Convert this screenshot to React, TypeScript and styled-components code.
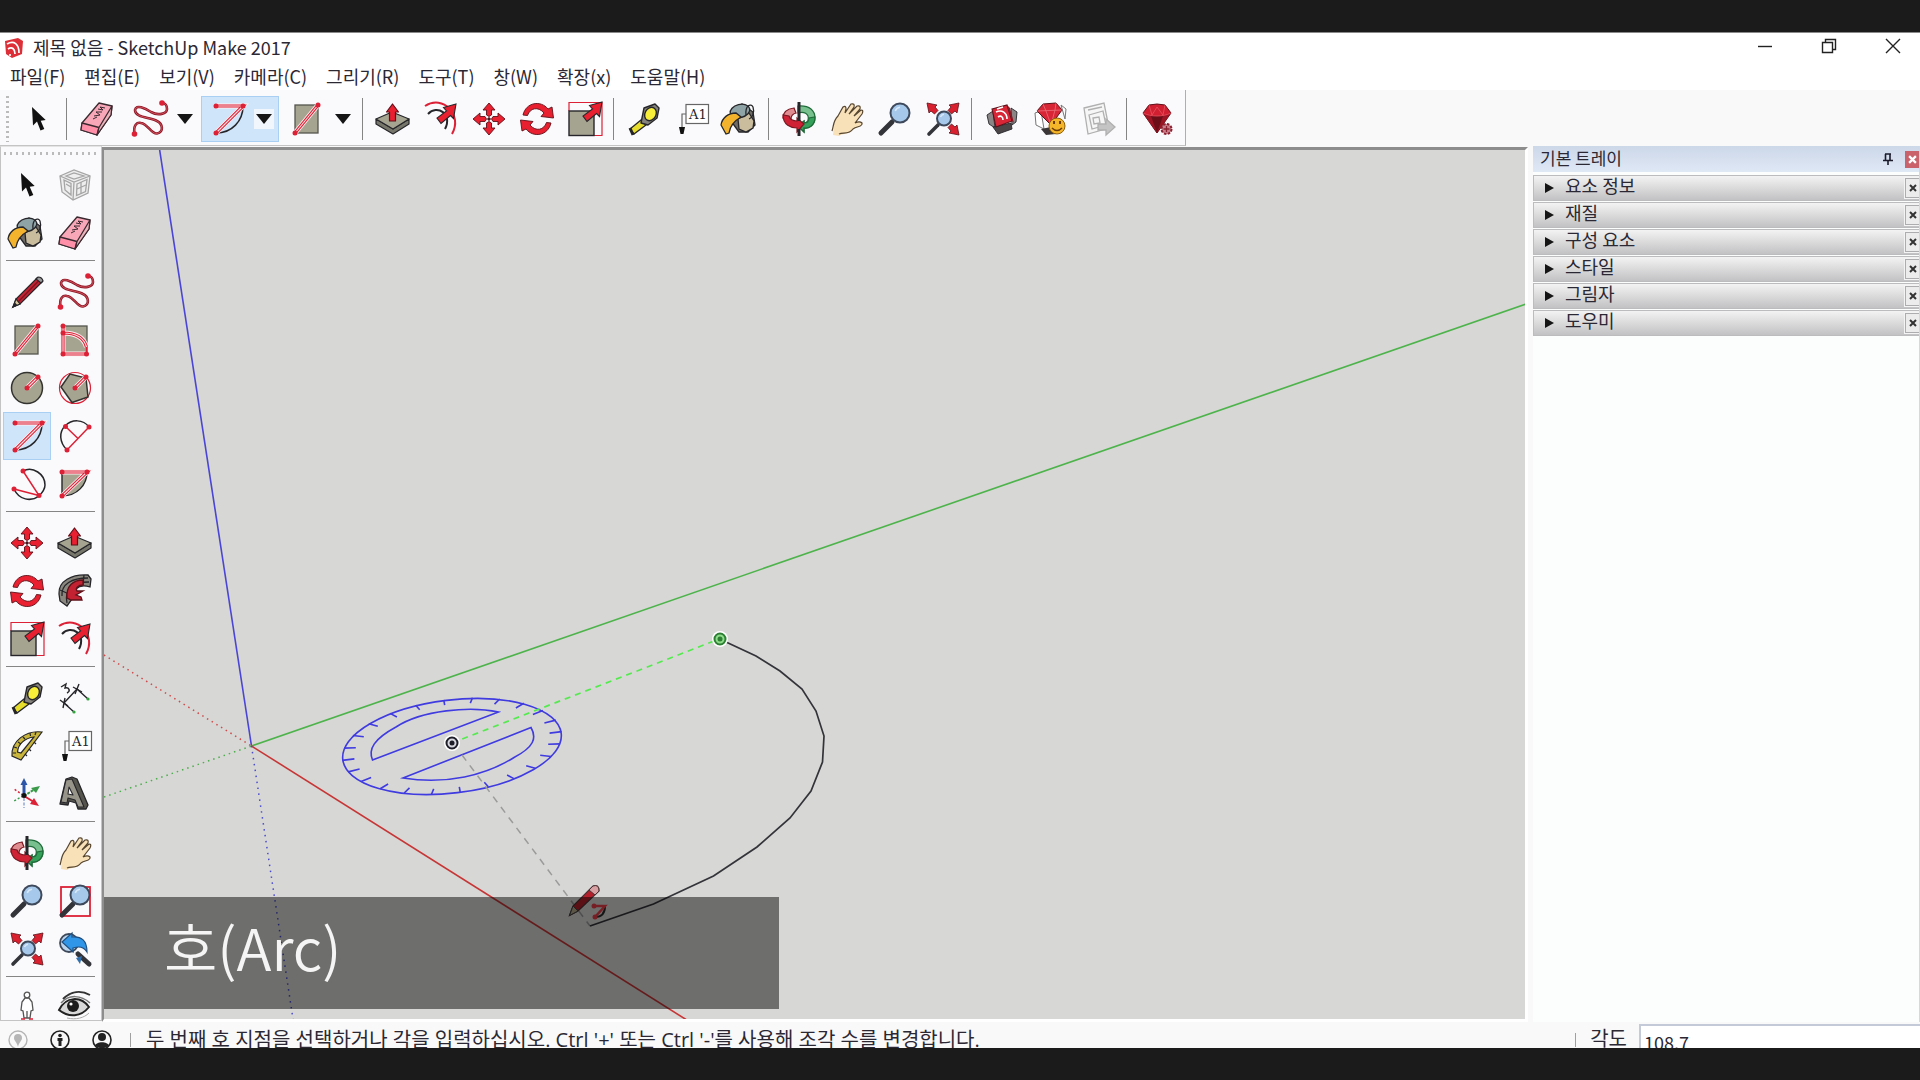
import React, { ReactNode } from "react";
import styled, { createGlobalStyle, css } from "styled-components";

const RED = "#dc2136";
const INK = "#26262a";
const STONE = "#a5a491";

const GlobalStyle = createGlobalStyle`
  *, *::before, *::after { box-sizing: border-box; }
  body { margin: 0; background: #1b1b1b; }
  button, input { font: inherit; color: inherit; border-radius: 0; }
`;

/* ---------- shell ---------- */

const Screen = styled.div`
  height: 100vh;
  padding: 32px 0;
  background: #1b1b1b;
  color: #2b2833;
  font-family: "Noto Sans CJK KR", sans-serif;
  font-size: 18px;
  line-height: 24px;
`;

const Window = styled.div`
  height: 100%;
  display: flex;
  flex-direction: column;
  overflow: hidden;
  background: #f9f9fa;
  border-top: 1px solid #8a8a8a;
`;

const PlainButton = styled.button`
  display: flex;
  align-items: center;
  justify-content: center;
  padding: 0;
  border: 0;
  background: transparent;
`;

const TitleBar = styled.header`
  flex: none;
  display: flex;
  align-items: center;
  height: 29px;
  padding-left: 4px;
  background: #fff;
`;

const Title = styled.h1`
  flex: 1;
  margin: 0;
  padding: 0 0 2px 9px;
  font-size: 18px;
  font-weight: 400;
  line-height: 24px;
`;

const WindowControls = styled.div`
  align-self: flex-start;
  display: flex;
  gap: 10px;
`;

const WindowButton = styled(PlainButton)`
  width: 54px;
  height: 26px;
`;

const MenuBar = styled.nav`
  flex: none;
  display: flex;
  align-items: center;
  gap: 19px;
  height: 28px;
  padding-left: 10px;
  background: #fff;
`;

const MenuButton = styled(PlainButton)`
  font-size: 18px;
  line-height: 24px;
`;

/* ---------- toolbars ---------- */

const TopStrip = styled.div`
  flex: none;
  display: flex;
  height: 56px;
  background: #f9f9f9;
`;

const TopToolbar = styled.div`
  display: flex;
  align-items: center;
  padding: 2px 4px 0 6px;
  background: #faf9fb;
  border-right: 1px solid #aeaeae;
  border-bottom: 1px solid #c4c4c4;
`;

const Grip = styled.span<{ $vertical?: boolean }>`
  flex: none;
  display: block;
  ${(p) =>
    p.$vertical
      ? css`
          width: 3px;
          height: 46px;
          margin-right: 5px;
          background: repeating-linear-gradient(#bbb 0 2px, transparent 2px 5px);
        `
      : css`
          width: 94px;
          height: 3px;
          margin: 5px 0 6px 1px;
          background: repeating-linear-gradient(90deg, #bbb 0 2px, transparent 2px 6px);
        `}
`;

const ToolButton = styled(PlainButton)<{ $active?: boolean }>`
  width: 48px;
  height: 48px;
  ${(p) =>
    p.$active &&
    css`
      background: #cfe5f9;
      border: 1px solid #a9cff3;
    `}
`;

const SplitButton = styled.div<{ $active?: boolean }>`
  display: flex;
  align-items: center;
  width: 78px;
  height: 46px;
  margin-left: 1px;
  border: 1px solid ${(p) => (p.$active ? "#a9cff3" : "transparent")};
  background: ${(p) => (p.$active ? "#cfe5f9" : "transparent")};
`;

const SplitMain = styled(PlainButton)`
  width: 52px;
  height: 44px;
`;

const SplitArrow = styled(PlainButton)<{ $active?: boolean }>`
  width: 20px;
  height: 20px;
  background: ${(p) => (p.$active ? "#f1f6fc" : "transparent")};
`;

const TopDivider = styled.span`
  width: 1px;
  height: 42px;
  margin: 0 6px 0 4px;
  background: #858585;
`;

const Body = styled.div`
  flex: 1;
  min-height: 0;
  display: flex;
`;

const SideToolbar = styled.div`
  flex: none;
  width: 102px;
  margin-bottom: 1px;
  padding: 0 2px;
  overflow: hidden;
  background: #faf9fb;
  border: 1px solid #c4c4c4;
  border-top-color: #e4e4e4;
`;

const ToolGrid = styled.div`
  display: grid;
  grid-template-columns: repeat(2, 48px);
`;

const SideDivider = styled.hr`
  height: 1px;
  margin: 3px 4px 7px 3px;
  border: 0;
  background: #858585;
`;

/* ---------- drawing area ---------- */

const Viewport = styled.main`
  position: relative;
  flex: 1;
  min-width: 0;
  margin-top: 1px;
  overflow: hidden;
  background: #d7d7d5;
  border: solid #8d8d8d;
  border-width: 3px 3px 3px 2px;
  border-right-color: #fff;
  border-bottom-color: #fff;
`;

const Scene = styled.svg`
  display: block;
  width: 100%;
  height: 100%;
`;

const Caption = styled.div`
  position: absolute;
  left: 0;
  bottom: 10px;
  display: flex;
  align-items: center;
  width: 675px;
  max-width: 100%;
  height: 112px;
  padding: 0 0 14px 60px;
  background: rgba(0, 0, 0, 0.49);
  color: #f5f5f5;
  font-size: 58px;
  font-weight: 350;
  line-height: 72px;
`;

/* ---------- tray ---------- */

const Tray = styled.aside`
  flex: none;
  width: 387px;
  margin: 0 0 0 5px;
  overflow: hidden;
  background: #fcfefe;
  border-right: 1px solid #d5d8de;
`;

const TrayHeader = styled.div`
  display: flex;
  align-items: center;
  height: 26px;
  margin-bottom: 3px;
  padding-left: 7px;
  background: linear-gradient(#ccd7e8, #dfe8f5);
`;

const TrayTitle = styled.h2`
  flex: 1;
  margin: 0;
  padding-bottom: 2px;
  font-size: 17px;
  font-weight: 400;
  line-height: 24px;
`;

const PinButton = styled(PlainButton)`
  width: 22px;
  height: 20px;
  margin-right: 6px;
`;

const TrayClose = styled(PlainButton)`
  width: 14px;
  height: 17px;
  background: #c9626b;
`;

const Panel = styled.section`
  display: flex;
  align-items: center;
  height: 26px;
  margin-bottom: 1px;
  padding-left: 10px;
  border: 1px solid #bcbcbe;
  border-right: 0;
  background: linear-gradient(#f3f3f3, #c2c2c4);
`;

const PanelToggle = styled(PlainButton)`
  flex: 1;
  justify-content: flex-start;
  gap: 11px;
  height: 24px;
`;

const PanelName = styled.span`
  padding-bottom: 6px;
  font-size: 18px;
  line-height: 18px;
`;

const PanelClose = styled(PlainButton)`
  width: 14px;
  height: 20px;
  border: 1px solid #adadaf;
  border-right: 0;
  background: #ececec;
  outline: 1px solid #f4f4f4;
`;

/* ---------- status bar ---------- */

const StatusBar = styled.footer`
  flex: none;
  display: flex;
  align-items: flex-start;
  height: 26px;
  overflow: hidden;
  padding-left: 8px;
`;

const StatusIcons = styled.div`
  display: flex;
  gap: 22px;
  padding: 8px 18px 0 0;
`;

const StatusDivider = styled.span`
  width: 1px;
  height: 14px;
  margin-top: 11px;
  background: #a0a0a0;
`;

const StatusText = styled.p`
  flex: 1;
  margin: 6px 0 0 15px;
  font-family: "Open Sans", "Noto Sans CJK KR", sans-serif;
  font-size: 20px;
  line-height: 24px;
  white-space: nowrap;
`;

const Measure = styled.label`
  display: flex;
  gap: 12px;
  padding-left: 14px;
  font-size: 20px;
  line-height: 32px;
`;

const MeasureInput = styled.input`
  width: 281px;
  height: 36px;
  margin-top: 2px;
  padding: 0 3px;
  border: 2px solid #c5cad8;
  border-right: 0;
  background: #fff;
  font-size: 18px;
  line-height: 32px;
`;

/* ---------- icons ---------- */

const Glyph = styled.svg`
  flex: none;
  display: block;
  overflow: visible;
`;

const Icon = ({ children }: { children: ReactNode }) => (
  <Glyph width="36" height="36" viewBox="0 0 36 36" fill="none" aria-hidden="true">
    {children}
  </Glyph>
);

const RedLine = ({ d }: { d: string }) => (
  <g>
    <path d={d} stroke="#fdf1f2" strokeWidth="5" />
    <path d={d} stroke={RED} strokeWidth="3.200" />
    <path d={d} stroke="#fbdfe2" strokeWidth="1.100" />
  </g>
);

const Dots = ({ at }: { at: number[][] }) => (
  <g fill={RED}>
    {at.map(([x, y]) => (
      <circle key={`${x}-${y}`} cx={x} cy={y} r="2.5" />
    ))}
  </g>
);

const Lens = ({ x, y, r }: { x: number; y: number; r: number }) => (
  <g>
    <circle cx={x} cy={y} r={r} fill="#a6c8ea" stroke="#3e4a5c" strokeWidth="2" />
    <path d={`M${x - r * 0.5} ${y - r * 0.2} A${r * 0.6} ${r * 0.6} 0 0 1 ${x} ${y - r * 0.6}`} stroke="#d7e8f8" strokeWidth="1.6" />
  </g>
);

const BigArrow = () => (
  <path d="M35 1 L32.5 15.5 L29.5 12.5 L20 20.5 L16 15 L25.5 8 L22.5 4.5 Z" fill="#e8202f" stroke={INK} strokeWidth="1.1" />
);

const RedCase = () => (
  <g>
    <path d="M3 14 L9 10 L11 27 L5 23 Z M27 7 L33 11 L32 21 L28 24 Z" fill="#8a8686" stroke={INK} strokeWidth=".9" />
    <path d="M9 26 L27 22 L28 28 L14 33 Z" fill="#4a4648" stroke={INK} strokeWidth=".9" />
    <path d="M8 8 L23 4 L28 20 L12 26 Z" fill="#d92636" stroke="#5a1219" strokeWidth="1.1" />
    <path d="M23 4 L26 7 L30 22 L28 20 Z" fill="#8c1a25" />
  </g>
);

const icons: Record<string, ReactNode> = {
  select: <path d="M12 6 L13 24.5 L17 20.5 L20.5 29.5 L24.3 28 L20.7 19.7 L25.7 19 Z" fill="#111" />,
  component: (
    <g stroke="#a5a5a5" strokeWidth="1.3" fill="#eee">
      <path d="M3 9 L17 3 L33 9 L31 26 L16 33 L5 25 Z" />
      <path d="M3 9 L17 15 L33 9 M17 15 L16 33 M7 13 L14 16.500 L14 28 L8 23 Z M20 17 L30 12.500 L28.500 24.500 L19.500 28.500 Z M9 9 L17 6 L27 9 L17 12 Z" />
      <path d="M9 17 L14 20 M20 22 L29 18 M24 15 V27" />
    </g>
  ),
  paint: (
    <g stroke={INK} strokeWidth="1.3">
      <path d="M10 8 L20 3 L31 11 L33 24 L26 31 L17 31 L9 20 Z" fill="#6f6c66" />
      <path d="M16 18 L27 12 L32 20 L31 27 L24 31 L17 28 Z" fill="#c9bd9e" />
      <ellipse cx="18" cy="10" rx="10" ry="6.500" transform="rotate(-14 18 10)" fill="#8ea3a6" />
      <path d="M24 14 C23 4 29 2 31 6 C33 12 30 17 27 18" fill="none" />
      <path d="M14 12 C6 12 0 17 -1 24 L4 33 L7 32 C8 25 12 20 19 16 Z" fill="#f4b32c" />
    </g>
  ),
  eraser: (
    <g stroke="#3a2a30" strokeWidth="1.3" strokeLinejoin="round">
      <path d="M20 2 L33 5 L32 14 L18 34 L2 29 L3 22 Z" fill="#f8a7b8" />
      <path d="M3 22 L20 26.500 L18 34 L2 29 Z" fill="#ff8fa9" />
      <path d="M20 26.500 L33 5 L32 14 L18 34 Z" fill="#eeb3ba" />
      <path d="M14 18 L18 16 M15 15 L21 14 L17 11 L23 11 M19 8 L24 9 L21 6 L26 7" strokeWidth="1" fill="none" />
    </g>
  ),
  pencil: (
    <g stroke={INK} strokeWidth="1.2">
      <path d="M4 33 L7 25 L28 4 L33 8 L11 30 Z" fill="#c22232" />
      <path d="M9.500 27.500 L30 6.500" stroke="#7c1520" />
      <path d="M4 33 L7 25 L11 30 Z" fill="#dcc79e" />
      <path d="M27 5 L29 3 Q33 3 34 7 L32 9 Z" fill="#9a9a9a" />
      <path d="M4 33 L6 29.500 L7.500 31 Z" fill="#111" />
    </g>
  ),
  freehand: (
    <g>
      <path d="M3.500 33 C2 24 6 21 10 22 C17 23 20 33 26 32.500 C33 31 32 23 26 20 C19 16 4 17 4 9 C5 3 14 7 20 11 C27 15 36 13 36 8 C36 4 34 2 31 2" stroke="#8e1826" strokeWidth="2.600" />
      <path d="M3.500 33 C2 24 6 21 10 22 C17 23 20 33 26 32.500 C33 31 32 23 26 20 C19 16 4 17 4 9 C5 3 14 7 20 11 C27 15 36 13 36 8 C36 4 34 2 31 2" stroke="#e0606b" strokeWidth=".8" />
      <circle cx="3.500" cy="33" r="2.800" fill={RED} />
      <circle cx="31" cy="2" r="2.800" fill={RED} />
    </g>
  ),
  rect: (
    <g>
      <rect x="6" y="4" width="23" height="28" fill={STONE} stroke="#55554d" strokeWidth="1.300" />
      <RedLine d="M6 32 L29 4" />
      <Dots at={[[6, 32], [29, 4]]} />
    </g>
  ),
  rotrect: (
    <g>
      <rect x="6" y="4" width="24" height="28" fill={STONE} stroke="#55554d" strokeWidth="1.300" />
      <RedLine d="M6 4 V32 H29.500 M6 11 C20 11 27 16 29.500 25" />
      <path d="M29.500 25 V32" stroke={RED} strokeWidth="1.400" />
      <Dots at={[[6, 4], [6, 11], [6, 32], [29.5, 32]]} />
    </g>
  ),
  circle: (
    <g>
      <circle cx="18" cy="18" r="15.500" fill={STONE} stroke="#33332f" strokeWidth="1.500" />
      <RedLine d="M18 18 L29 7" />
      <Dots at={[[18, 18], [29, 7]]} />
    </g>
  ),
  polygon: (
    <g>
      <circle cx="18" cy="18" r="15.500" stroke={RED} strokeWidth="1.200" />
      <path d="M4 17 L13 4 L29 8 L31 27 L15 32.500 Z" fill={STONE} stroke="#33332f" strokeWidth="1.500" />
      <RedLine d="M18 18 L29 7" />
      <Dots at={[[18, 18], [29, 7]]} />
    </g>
  ),
  arc2: (
    <g>
      <path d="M33 5 C33 20 22 32 6 32" stroke={INK} strokeWidth="1.500" />
      <RedLine d="M6 5 H33 L6 32" />
      <Dots at={[[6, 5], [33, 5], [6, 32]]} />
    </g>
  ),
  arc: (
    <g>
      <path d="M10 32 C2 24 2 14 8 8 C15 1 26 1 32 9" stroke={INK} strokeWidth="1.500" />
      <path d="M10 32 L32 9 M8.500 8.500 L21 20.500" stroke={RED} strokeWidth="1.500" />
      <Dots at={[[8.5, 8.5], [32, 9], [10, 32]]} />
    </g>
  ),
  arc3: (
    <g>
      <path d="M14 5 C24 0 36 8 36 19 C36 24 33 27 30 30 C22 36 10 34 5 23" stroke={INK} strokeWidth="1.500" />
      <path d="M14 5 L30 29.500 L5 23" stroke={RED} strokeWidth="1.500" />
      <Dots at={[[14, 5], [30, 29.5], [5, 23]]} />
    </g>
  ),
  pie: (
    <g>
      <path d="M5 6 H30 C30 19 20 30 5 30 Z" fill={STONE} stroke={INK} strokeWidth="1.400" />
      <RedLine d="M5 6 H30 L5 30" />
      <Dots at={[[5, 6], [30, 6], [5, 30]]} />
    </g>
  ),
  move: (
    <g fill="#e8202f" stroke="#5e1119" strokeWidth=".9">
      {[0, 90, 180, 270].map((a) => (
        <path key={a} transform={`rotate(${a} 18 18)`} d="M18 2 L24 9 L20.500 9 L20.500 14 L18 15.500 L15.500 14 L15.500 9 L12 9 Z" />
      ))}
      <circle cx="18" cy="18" r="1.300" fill={INK} />
    </g>
  ),
  pushpull: (
    <g stroke={INK} strokeWidth="1.200" strokeLinejoin="round">
      <path d="M1 18 L18 28 L34 18 V23 L18 33 L1 23 Z" fill="#77766a" />
      <path d="M1 18 L17 11 L34 18 L18 28 Z" fill={STONE} />
      <path d="M17.500 3 L23.500 11 H20.500 V20 H14.500 V11 H11.500 Z" fill="#e8202f" stroke="#5e1119" />
    </g>
  ),
  rotate: (
    <g fill="#e8202f" stroke="#5e1119" strokeWidth=".9">
      {[0, 180].map((a) => (
        <path key={a} transform={`rotate(${a} 18 18)`} d="M4 14 C7 1 22 -1 29 8 L33 6 L34.500 17 L22 15.500 L25 12 C19 5 11 7 8.500 14.500 Z" />
      ))}
    </g>
  ),
  followme: (
    <g stroke={INK} strokeWidth="1.300">
      <path d="M2 21 C1 8 15 1 31 2 L34 6 L33 14 C27 12 22 13 19 16 L15 26 L10 33 L3 28 Z" fill="#8a887e" />
      <path d="M5 23 C4 11 15 5 31 5 M10 30 C7 17 15 9 32 9 M27 2 L26 12 M3 17 L12 21" fill="none" />
      <path d="M26 7 C16 7 9 13 10 25 L14 27 L25 27 L24 24 L19 22 L26 18 L20 18 C18 15 21 12 26 12 Z" fill="#c22232" stroke="#5e1119" />
    </g>
  ),
  scale: (
    <g>
      <path d="M2 10 V1.500 H35 V34.500 H27" stroke={RED} strokeWidth="1.200" />
      <rect x="2" y="10" width="25" height="24.500" fill={STONE} stroke={INK} strokeWidth="1.400" />
      <BigArrow />
    </g>
  ),
  offset: (
    <g>
      <path d="M2 5 C20 -7 40 14 29 33" stroke={RED} strokeWidth="2" />
      <path d="M5 13 C14 3 30 13 22 28" stroke={INK} strokeWidth="2" />
      <g transform="translate(-2 2)"><BigArrow /></g>
    </g>
  ),
  tape: (
    <g stroke={INK} strokeWidth="1.400" strokeLinejoin="round">
      <path d="M4 28 L15 19 L20 24 L8 33 Z" fill="#e7dd2c" />
      <path d="M4 27 L7 34" strokeWidth="3" />
      <path d="M18 7 L29 3 L33 7 L31 17 L22 24 L15 22 Z" fill="#85837b" />
      <ellipse cx="24.500" cy="13" rx="5.500" ry="7" transform="rotate(28 24.500 13)" fill="#f7ee3a" />
    </g>
  ),
  dimension: (
    <g stroke={INK} strokeWidth="1.400">
      <path d="M7 23 L20 9 L31 19 M7 23 L17 32" />
      <path d="M3 20 L11 26 M8 18 L6 28 M16 7 L25 12 M22 4 L18 14" />
      <path d="M4 7 L9 4 L8 8 C12 7 14 11 10 13" />
      <circle cx="31" cy="19" r="1.600" fill="#2fa53b" stroke="none" />
      <circle cx="17" cy="32" r="1.600" fill="#2fa53b" stroke="none" />
    </g>
  ),
  protractor: (
    <g stroke={INK} strokeWidth="1.200">
      <path d="M33 4 C17 2 2 13 3 28 L12 32 Z" fill="#c9b53b" />
      <path d="M25 9 C16 10 9 16 8.500 24 L12 25 Z" fill="#fbfafc" />
      <path d="M27 4 L26 7 M21 5 L21.500 8 M14 9 L16 11 M9 14 L12 16 M5 19 L8 20 M4 25 L7 25 M16 26 L18 28 M20 21 L22 23 M25 14 L27 16" />
    </g>
  ),
  text: (
    <g>
      <rect x="12" y="3.500" width="22.500" height="19" fill="#fff" stroke="#666" strokeWidth="1.200" />
      <text x="15" y="18" fontFamily="DejaVu Serif, serif" fontSize="13" fill={INK}>A1</text>
      <path d="M12 13 H8 V27" stroke="#666" strokeWidth="1.200" />
      <path d="M5 26 H11 L9.500 33 H6.500 Z" fill="#111" />
    </g>
  ),
  axes: (
    <g strokeWidth="2">
      <path d="M15 19 V7" stroke="#2d55a8" strokeWidth="3" />
      <path d="M15 2 L18.500 9 H11.500 Z" fill="#2d55a8" />
      <path d="M15 20 L26 13" stroke="#3a9a4a" strokeDasharray="3 1" />
      <path d="M31 10 L27 17 L22 12 Z" fill="#3a9a4a" />
      <path d="M15 20 L25 26" stroke={RED} />
      <path d="M30 30 L21 28 L25 22 Z" fill={RED} />
      <path d="M14 19 L5 13" stroke={RED} strokeDasharray="2 2" strokeWidth="1.500" />
      <path d="M14 20 L5 25" stroke="#3a9a4a" strokeDasharray="2 2" strokeWidth="1.500" />
      <path d="M15 22 V32" stroke="#8fa6d6" strokeDasharray="3 1.500" strokeWidth="1.500" />
      <circle cx="15" cy="19.500" r="2.500" fill="#111" />
    </g>
  ),
  text3d: (
    <g strokeLinejoin="round">
      <path d="M9 3 L15 1 L20 3 L31 29 L29 33 L21 33 L19 27 L12 25 L11 29 L3 28 Z" fill="#55544d" stroke={INK} strokeWidth="1.300" />
      <path d="M9 4 L15 3 L27 31 L21 31 L18 24 L11 22 L10 27 L4 26 Z" fill="#97958a" stroke={INK} strokeWidth="1.100" />
      <path d="M12 11 L16 19 L11 18 Z" fill="#faf9fb" stroke={INK} strokeWidth="1.100" />
    </g>
  ),
  orbit: (
    <g strokeWidth="1.200">
      <path d="M17 5 C29 4 34 10 34 17 C34 24 28 28 23 27 L23 31 L17 25 L23 20 L23 22 C27 22 28 18 27 15 C25 11 21 11 17 12 Z" fill="#79c08f" stroke="#1f6b39" />
      <path d="M34 16 C34 24 28 28 23 27 L23 31 L17 25 L23 20 L23 22 C26 22 28 20 28 17 Z" fill="#35a05a" stroke="#1f6b39" />
      <path d="M13 7 C5 8 2 12 2 17 L10 18 C10 15 11 13 15 12 Z" fill="#df8d90" stroke="#7c1822" />
      <path d="M2 14 C2 24 10 27 16 27 V31 L23 23 L16 17 V20 C12 20 9 18 8 15 Z" fill="#cf2335" stroke="#7c1822" />
      <path d="M18 1 V20 M18 28 V35" stroke={INK} strokeWidth="3" />
    </g>
  ),
  pan: (
    <g>
      <path d="M4 34 C5 26 4 20 9 15 L14 6 Q17 4 17 8 L16 12 L22 3 Q26 2 25 6 L20 13 L28 5 Q32 4 31 8 L25 15 L32 9 Q35 9 33 13 L26 22 C28 21 31 20 33 22 C34 26 28 25 24 28 C20 34 14 32 10 35" fill="#f8e0b8" />
      <path d="M3 30 C5 24 4 20 9 15 L14 6 Q17 4 17 8 L16 12 L22 3 Q26 2 25 6 L20 13 L28 5 Q32 4 31 8 L25 15 L32 9 Q35 9 33 13 L26 22 C28 21 31 20 33 22 C34 26 28 25 24 28 C20 34 14 31 10 33" stroke="#55452f" strokeWidth="1.200" />
    </g>
  ),
  zoom: (
    <g>
      <path d="M4 32 L15 21" stroke="#33343a" strokeWidth="5" strokeLinecap="round" />
      <Lens x={23} y={12} r={9.5} />
    </g>
  ),
  zoomwin: (
    <g>
      <rect x="4" y="4" width="29" height="29" stroke={RED} strokeWidth="1.800" />
      <path d="M5 32 L16 21" stroke="#33343a" strokeWidth="5" strokeLinecap="round" />
      <Lens x={23} y={12} r={9.5} />
    </g>
  ),
  extents: (
    <g>
      <path d="M4 33 L13 24" stroke="#33343a" strokeWidth="3.600" strokeLinecap="round" />
      <g fill="#d8202f" stroke="#5e1119" strokeWidth=".8">
        {[0, 90, 180].map((a) => (
          <path key={a} transform={`rotate(${a} 18 18)`} d="M2 2 L12 4 L10 6 L13 9.500 L9.500 13 L6 10 L4 12 Z" />
        ))}
      </g>
      <Lens x={19} y={17.5} r={7} />
    </g>
  ),
  previous: (
    <g>
      <path d="M21 23 L32 33" stroke="#33343a" strokeWidth="5" strokeLinecap="round" />
      <circle cx="12" cy="12" r="9" fill="#bcd5ec" stroke="#3e4a5c" strokeWidth="1.800" />
      <path d="M5 11 L15 2 V6 C24 5 30 9 30 21 C27 16 22 15 16 17 V21 Z" fill="#2f96e8" stroke="#1f4f80" strokeWidth="1.200" />
      <path d="M19 27 L25 25 L23 33 Z" fill="#2f6fae" />
    </g>
  ),
  person: (
    <g stroke="#555" strokeWidth="1.300" fill="#fff">
      <path d="M15 28 L14 21 L12 20 L13 12 L16 8 H20 L23 12 L24 20 L22 21 L21 28 Z M18 21 V28" />
      <circle cx="18" cy="5" r="2.800" />
      <path d="M12 29 H16 M20 29 H24" stroke={RED} />
    </g>
  ),
  eye: (
    <g>
      <path d="M6 9 C14 1 24 0 33 5" stroke="#333" strokeWidth="2" />
      <path d="M2 20 C9 6 24 6 32 17 C24 27 12 28 2 20 Z" fill="#d8d8d8" stroke="#222" strokeWidth="2" />
      <path d="M4 13 C12 4 24 5 33 13" stroke="#777" strokeWidth="1.500" />
      <circle cx="16" cy="16" r="6" fill="#1c1c1c" />
      <circle cx="14" cy="14" r="1.600" fill="#fff" />
      <path d="M10 28 C19 30 27 28 32 23" stroke="#aaa" />
    </g>
  ),
  warehouse: (
    <g>
      <RedCase />
      <path d="M12 11 C18 8 23 12 23 18 M14 16 C17 14 19 16 19 19 M13 8 L19 6" stroke="#fff" strokeWidth="1.600" />
    </g>
  ),
  extensions: (
    <g>
      <path d="M3 12 L9 10 L12 28 L4 24 Z M29 4 L34 8 L33 18 Z" fill="#fff" stroke="#777" />
      <path d="M9 28 L24 25 V33 L14 34 Z" fill="#3a3638" />
      <path d="M5 10 L11 3 L24 2 L30 9 L19 24 Z" fill="#d92636" stroke="#5a1219" />
      <path d="M5 10 L30 9 M11 3 L14 10 L19 24 L23 9 L24 2" stroke="#e8707a" strokeWidth=".8" />
      <circle cx="25" cy="25" r="8" fill="#f5b62a" stroke="#8d5f0c" />
      <path d="M20 27 Q25 32 30 27" stroke="#6b3d05" strokeWidth="1.500" />
      <path d="M22 20 V23 M28 20 V23" stroke="#6b3d05" strokeWidth="2" />
    </g>
  ),
  layout: (
    <g stroke="#b0b0b0" strokeWidth="1.300">
      <path d="M4 7 L24 2 L29 27 L8 33 Z" fill="#f6f6f6" />
      <path d="M8 9 L22 6 M9 14 L23 10 L26 24 L12 28 Z M13 17 L19 16 L20 22 L14 23 Z" />
      <path d="M18 23 H26 V18 L35 26 L26 34 V29 H18 Z" fill="#c4c4c4" />
    </g>
  ),
  ruby: (
    <g>
      <path d="M4 12 L10 4 Q18 2 26 4 L32 12 L18 32 Z" fill="#cf1f30" stroke="#5e1119" />
      <path d="M4 12 L18 32 L32 12 C24 16 12 16 4 12 Z" fill="#9c1524" />
      <path d="M12 15 L18 32 L24 15 Z" fill="#6c0e18" />
      <path d="M4 12 C12 16 24 16 32 12 M10 4 L13 14 L18 6 L24 14 L26 4" stroke="#e8525e" strokeWidth=".8" />
      <circle cx="27.500" cy="28" r="5" fill="#c7808a" stroke="#8d1f30" strokeWidth="2" strokeDasharray="2.500 1.400" />
      <path d="M27.500 25 V31 M24.500 28 H30.500" stroke="#8d1f30" strokeWidth="1.300" />
    </g>
  ),
};

const Tool = ({ name, label, active }: { name: string; label: string; active?: boolean }) => (
  <ToolButton type="button" aria-label={label} $active={active}>
    <Icon>{icons[name]}</Icon>
  </ToolButton>
);

const SplitTool = ({ name, label, active }: { name: string; label: string; active?: boolean }) => (
  <SplitButton $active={active}>
    <SplitMain type="button" aria-label={label}>
      <Icon>{icons[name]}</Icon>
    </SplitMain>
    <SplitArrow type="button" aria-label={`${label} 더 보기`} $active={active}>
      <Glyph width="16" height="10" viewBox="0 0 16 10" aria-hidden="true">
        <path d="M0 0 H16 L8 10 Z" fill="#151515" />
      </Glyph>
    </SplitArrow>
  </SplitButton>
);

/* ---------- data ---------- */

type ToolDef = [name: string, label: string];

const menus = ["파일(F)", "편집(E)", "보기(V)", "카메라(C)", "그리기(R)", "도구(T)", "창(W)", "확장(x)", "도움말(H)"];

const topGroups: ToolDef[][] = [
  [["pushpull", "밀기/끌기"], ["offset", "오프셋"], ["move", "이동"], ["rotate", "회전"], ["scale", "배율"]],
  [["tape", "줄자"], ["text", "텍스트"], ["paint", "페인트통"]],
  [["orbit", "궤도"], ["pan", "이동 보기"], ["zoom", "확대/축소"], ["extents", "범위 확대"]],
  [["warehouse", "3D Warehouse"], ["extensions", "Extension Warehouse"], ["layout", "LayOut"]],
  [["ruby", "확장 관리자"]],
];

const sideGroups: ToolDef[][] = [
  [["select", "선택"], ["component", "구성 요소"], ["paint", "페인트통"], ["eraser", "지우개"]],
  [
    ["pencil", "선"], ["freehand", "자유 곡선"], ["rect", "직사각형"], ["rotrect", "회전 직사각형"],
    ["circle", "원"], ["polygon", "다각형"], ["arc2", "2점 호"], ["arc", "호"], ["arc3", "3점 호"], ["pie", "파이"],
  ],
  [["move", "이동"], ["pushpull", "밀기/끌기"], ["rotate", "회전"], ["followme", "따라가기"], ["scale", "배율"], ["offset", "오프셋"]],
  [["tape", "줄자"], ["dimension", "치수"], ["protractor", "각도기"], ["text", "텍스트"], ["axes", "축"], ["text3d", "3D 텍스트"]],
  [["orbit", "궤도"], ["pan", "이동 보기"], ["zoom", "확대/축소"], ["zoomwin", "창 확대"], ["extents", "범위 확대"], ["previous", "이전"]],
  [["person", "카메라 배치"], ["eye", "둘러보기"]],
];

const panels = ["요소 정보", "재질", "구성 요소", "스타일", "그림자", "도우미"];

/* ---------- scene ---------- */

const CENTER = { x: 452, y: 746 };

// The protractor lies on the ground plane: u follows the green axis, v the red one.
const onDisc = (deg: number, k: number) => {
  const a = (deg * Math.PI) / 180;
  const x = CENTER.x + k * (Math.cos(a) * 90.9 + Math.sin(a) * 61.9);
  const y = CENTER.y + k * (Math.cos(a) * -35.5 + Math.sin(a) * 32.6);
  return `${x.toFixed(1)} ${y.toFixed(1)}`;
};

const ticks = Array.from({ length: 24 }, (_, i) => `M${onDisc(i * 15, 1)} L${onDisc(i * 15, 0.89)}`).join(" ");

const Snap = ({ x, y, color, fill }: { x: number; y: number; color: string; fill: string }) => (
  <g>
    <circle cx={x} cy={y} r="8" fill="#fff" />
    <circle cx={x} cy={y} r="5.500" fill={fill} stroke={color} strokeWidth="2" />
    <circle cx={x} cy={y} r="2.500" fill={color} />
  </g>
);

const Drawing = () => (
  <Scene viewBox="104 150 1421 869" preserveAspectRatio="xMinYMin slice" fill="none" role="img" aria-label="호 그리기">
    <path d="M159.500 149 L251.500 746" stroke="#4a45d6" strokeWidth="1.600" />
    <path d="M251.500 746 L1526 304" stroke="#4db34b" strokeWidth="1.600" />
    <path d="M251.500 746 L686 1019.500" stroke="#c73636" strokeWidth="1.600" />
    <path d="M104 655 L251.500 746" stroke="#d04a4a" strokeWidth="1.500" strokeDasharray="1.500 4" />
    <path d="M104 797 L251.500 746" stroke="#4fae4f" strokeWidth="1.500" strokeDasharray="1.500 4" />
    <path d="M251.500 746 L293 1019" stroke="#4a4ad0" strokeWidth="1.500" strokeDasharray="1.500 4.500" />

    <g stroke="#3f3be0" strokeWidth="1.600">
      <ellipse cx="452" cy="746.500" rx="110" ry="46.500" transform="rotate(-6.900 452 746.500)" />
      <path d={ticks} />
      <path d="M372.500 760 L498.500 712 C470 706 422 710 396 727 C374 739 368 749 372.500 760 Z" />
      <path d="M403 778 L531 727.500 C537 738 534 747 514 757.500 C486 775 447 785 403 778 Z" />
    </g>

    <path d="M452 743 L714 641" stroke="#55ea4f" strokeWidth="1.700" strokeDasharray="6 5" />
    <path d="M462 755 L590 926" stroke="#9b9b9b" strokeWidth="1.500" strokeDasharray="7 6" />
    <path
      d="M726 642 L756 656 L780 671 L802 689 L816 711 L824 736 L822.500 762 L811 791 L790 818 L757 847 L713.500 876 L653.500 904 L590 926"
      stroke="#33333a"
      strokeWidth="1.700"
    />
    <Snap x={452} y={743} color="#1d1e28" fill="#d8d8e0" />
    <Snap x={720} y={639} color="#2c7f33" fill="#8fdc8b" />

    <path d="M569.500 915.500 L573 906 L593 886 Q599 884 599 891 L578 911 Z" fill="#b3202c" stroke="#4b3335" strokeWidth="1.200" />
    <path d="M569.500 915.500 L573 906 L578 911 Z" fill="#b5a98c" stroke="#444" />
    <path d="M589 890 L593 886 Q599 884 599 891 L595 895 Z" fill="#d9a0a4" stroke="#4b3335" />
    <path d="M605 906 C605 914 601 917 595 917" stroke="#2c2c2c" strokeWidth="2" />
    <path d="M594 906 H605 L595 917" stroke="#e8404c" strokeWidth="2.500" />
    <circle cx="594" cy="906" r="2.500" fill="#e8404c" />
    <circle cx="595" cy="917" r="2.500" fill="#e8404c" />
  </Scene>
);

const Cross = ({ color, size }: { color: string; size: number }) => (
  <Glyph width={size} height={size} viewBox="0 0 8 8" aria-hidden="true">
    <path d="M1 1 L7 7 M7 1 L1 7" stroke={color} strokeWidth="2" />
  </Glyph>
);

const App = () => (
  <Screen>
    <GlobalStyle />
    <Window>
      <TitleBar>
        <Glyph width="20" height="20" viewBox="0 0 20 20" fill="none" aria-hidden="true">
          <path d="M1 3 L14 0 L19 3 L18 16 L8 20 L2 16 Z" fill="#dd2f38" />
          <path d="M3 6 C10 2 15 6 15 15 M4 11 C8 8 11 11 11 16 M6 16 V18" stroke="#fff" strokeWidth="1.700" />
        </Glyph>
        <Title>제목 없음 - SketchUp Make 2017</Title>
        <WindowControls>
          <WindowButton type="button" aria-label="최소화">
            <Glyph width="16" height="16" viewBox="0 0 16 16" aria-hidden="true">
              <path d="M1 8.500 H15" stroke="#222" strokeWidth="1.400" />
            </Glyph>
          </WindowButton>
          <WindowButton type="button" aria-label="이전 크기로">
            <Glyph width="16" height="16" viewBox="0 0 16 16" fill="none" aria-hidden="true">
              <path d="M1.500 4.500 H11.500 V14.500 H1.500 Z M4.500 4 V1.500 H14.500 V11.500 H12" stroke="#222" strokeWidth="1.400" />
            </Glyph>
          </WindowButton>
          <WindowButton type="button" aria-label="닫기">
            <Glyph width="16" height="16" viewBox="0 0 16 16" aria-hidden="true">
              <path d="M1 1 L15 15 M15 1 L1 15" stroke="#222" strokeWidth="1.400" />
            </Glyph>
          </WindowButton>
        </WindowControls>
      </TitleBar>

      <MenuBar>
        {menus.map((m) => (
          <MenuButton type="button" key={m}>{m}</MenuButton>
        ))}
      </MenuBar>

      <TopStrip>
        <TopToolbar>
          <Grip $vertical />
          <Tool name="select" label="선택" />
          <TopDivider />
          <Tool name="eraser" label="지우개" />
          <SplitTool name="freehand" label="자유 곡선" />
          <SplitTool name="arc2" label="2점 호" active />
          <SplitTool name="rect" label="직사각형" />
          {topGroups.map((group, i) => (
            <React.Fragment key={i}>
              <TopDivider />
              {group.map(([name, label]) => (
                <Tool key={name} name={name} label={label} />
              ))}
            </React.Fragment>
          ))}
        </TopToolbar>
      </TopStrip>

      <Body>
        <SideToolbar>
          <Grip />
          {sideGroups.map((group, i) => (
            <React.Fragment key={i}>
              {i > 0 && <SideDivider />}
              <ToolGrid>
                {group.map(([name, label]) => (
                  <Tool key={name} name={name} label={label} active={name === "arc2"} />
                ))}
              </ToolGrid>
            </React.Fragment>
          ))}
        </SideToolbar>

        <Viewport>
          <Drawing />
          <Caption>호(Arc)</Caption>
        </Viewport>

        <Tray>
          <TrayHeader>
            <TrayTitle>기본 트레이</TrayTitle>
            <PinButton type="button" aria-label="고정">
              <Glyph width="10" height="12" viewBox="0 0 10 12" fill="none" aria-hidden="true">
                <path d="M2 1 H8 M2.500 1 V7 M7 1 V7 M0 7.500 H10 M5 8 V12" stroke="#1b1b2b" strokeWidth="1.600" />
              </Glyph>
            </PinButton>
            <TrayClose type="button" aria-label="트레이 닫기">
              <Cross color="#fff" size={9} />
            </TrayClose>
          </TrayHeader>
          {panels.map((p) => (
            <Panel key={p}>
              <PanelToggle type="button">
                <Glyph width="10" height="10" viewBox="0 0 10 10" aria-hidden="true">
                  <path d="M1 0 L10 5 L1 10 Z" fill="#151515" />
                </Glyph>
                <PanelName>{p}</PanelName>
              </PanelToggle>
              <PanelClose type="button" aria-label={`${p} 닫기`}>
                <Cross color="#333" size={8} />
              </PanelClose>
            </Panel>
          ))}
        </Tray>
      </Body>

      <StatusBar>
        <StatusIcons>
          <Glyph width="20" height="20" viewBox="0 0 20 20" fill="none" aria-hidden="true">
            <circle cx="10" cy="10" r="9" stroke="#b5b5b5" strokeWidth="1.400" />
            <path d="M10 17 C9 12 6 11 6 8 A4 4 0 0 1 14 8 C14 11 11 12 10 17 Z" fill="#b5b5b5" />
          </Glyph>
          <Glyph width="20" height="20" viewBox="0 0 20 20" fill="none" aria-hidden="true">
            <circle cx="10" cy="10" r="9" stroke="#222" strokeWidth="1.600" />
            <circle cx="10" cy="5.500" r="1.800" fill="#222" />
            <path d="M7.500 8 H12.500 V11 H11.500 V16 H8.500 V11 H7.500 Z" fill="#222" />
          </Glyph>
          <Glyph width="20" height="20" viewBox="0 0 20 20" fill="none" aria-hidden="true">
            <circle cx="10" cy="10" r="9" stroke="#222" strokeWidth="1.600" />
            <circle cx="10" cy="7" r="4" fill="#222" />
            <path d="M3 16 C4 11 16 11 17 16 L10 19 Z" fill="#222" />
          </Glyph>
        </StatusIcons>
        <StatusDivider />
        <StatusText>두 번째 호 지점을 선택하거나 각을 입력하십시오. Ctrl '+' 또는 Ctrl '-'를 사용해 조각 수를 변경합니다.</StatusText>
        <StatusDivider />
        <Measure>
          각도
          <MeasureInput defaultValue="108.7" />
        </Measure>
      </StatusBar>
    </Window>
  </Screen>
);

export default App;
